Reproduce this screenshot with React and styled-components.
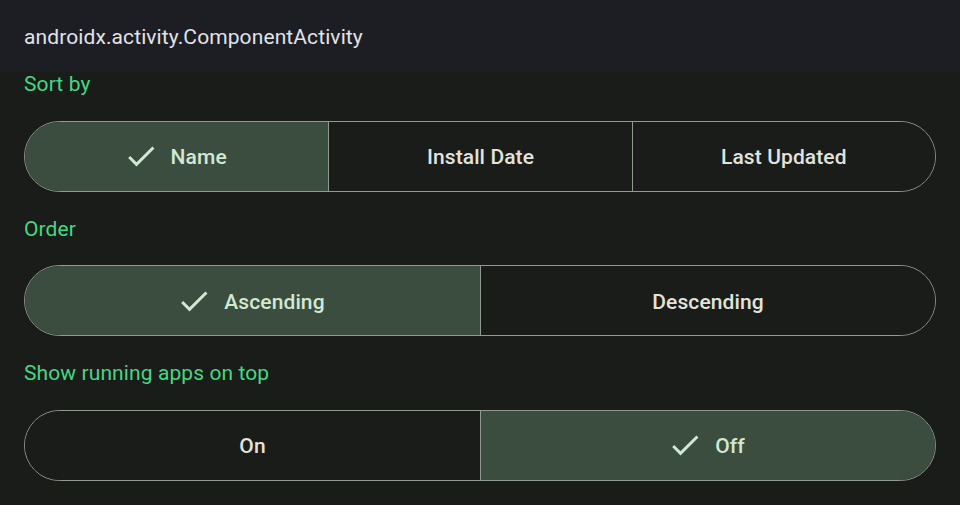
import React, { useState } from "react";
import styled, { createGlobalStyle } from "styled-components";

const Global = createGlobalStyle`
  html, body { margin: 0; padding: 0; background: #1a1c19; }
  body { font-family: Roboto, "Noto Sans", sans-serif; -webkit-font-smoothing: antialiased; }
  * { box-sizing: border-box; }
`;

const Page = styled.div`
  width: 960px;
  height: 505px;
  background: #1a1c19;
  overflow: hidden;
  display: flex;
  flex-direction: column;
`;

const TitleBar = styled.header`
  height: 72px;
  flex: none;
  background: #1c1e24;
  display: flex;
  align-items: center;
  padding: 2px 24px 0;
  color: #e2e2e9;
  font-size: 21px;
  font-weight: 400;
  letter-spacing: 0.1px;
`;

const Content = styled.main`
  display: flex;
  flex-direction: column;
  gap: 25px;
  padding: 0 24px 0;
`;

const Section = styled.section`
  display: flex;
  flex-direction: column;
  gap: 24.5px;
`;

const Label = styled.div`
  height: 24px;
  line-height: 24px;
  font-size: 21px;
  color: #40da82;
  letter-spacing: 0.1px;
`;

const Group = styled.div`
  display: grid;
  grid-template-columns: repeat(${(p) => p.$count}, 1fr);
  height: 71px;
  border: 1.5px solid #929990;
  border-radius: 36px;
  overflow: hidden;
`;

const Segment = styled.button`
  appearance: none;
  border: none;
  margin: 0;
  padding: 2px 0 0;
  font: inherit;
  border-left: ${(p) => (p.$first ? "none" : "1.5px solid #929990")};
  background: ${(p) => (p.$selected ? "#3b4d3f" : "#1a1c19")};
  color: ${(p) => (p.$selected ? "#d2e8d3" : "#e2e3dd")};
  font-size: 21px;
  font-weight: 500;
  letter-spacing: 0.1px;
  display: flex;
  align-items: center;
  justify-content: center;
  gap: 12px;
  cursor: pointer;
`;

const Check = styled.svg`
  width: 36px;
  height: 36px;
  flex: none;
  fill: currentColor;
  margin-left: -4px;
  margin-top: -2px;
`;

const CheckIcon = () => (
  <Check viewBox="0 0 24 24">
    <path d="M9 16.17L4.83 12l-1.42 1.41L9 19 21 7l-1.41-1.41z" />
  </Check>
);

function Segmented({ options, value, onChange }) {
  return (
    <Group $count={options.length}>
      {options.map((o, i) => (
        <Segment
          key={o}
          $first={i === 0}
          $selected={o === value}
          onClick={() => onChange(o)}
        >
          {o === value && <CheckIcon />}
          <span>{o}</span>
        </Segment>
      ))}
    </Group>
  );
}

export default function App() {
  const [sort, setSort] = useState("Name");
  const [order, setOrder] = useState("Ascending");
  const [running, setRunning] = useState("Off");
  return (
    <Page>
      <Global />
      <TitleBar>androidx.activity.ComponentActivity</TitleBar>
      <Content>
        <Section>
          <Label>Sort by</Label>
          <Segmented
            options={["Name", "Install Date", "Last Updated"]}
            value={sort}
            onChange={setSort}
          />
        </Section>
        <Section>
          <Label>Order</Label>
          <Segmented
            options={["Ascending", "Descending"]}
            value={order}
            onChange={setOrder}
          />
        </Section>
        <Section>
          <Label>Show running apps on top</Label>
          <Segmented
            options={["On", "Off"]}
            value={running}
            onChange={setRunning}
          />
        </Section>
      </Content>
    </Page>
  );
}
